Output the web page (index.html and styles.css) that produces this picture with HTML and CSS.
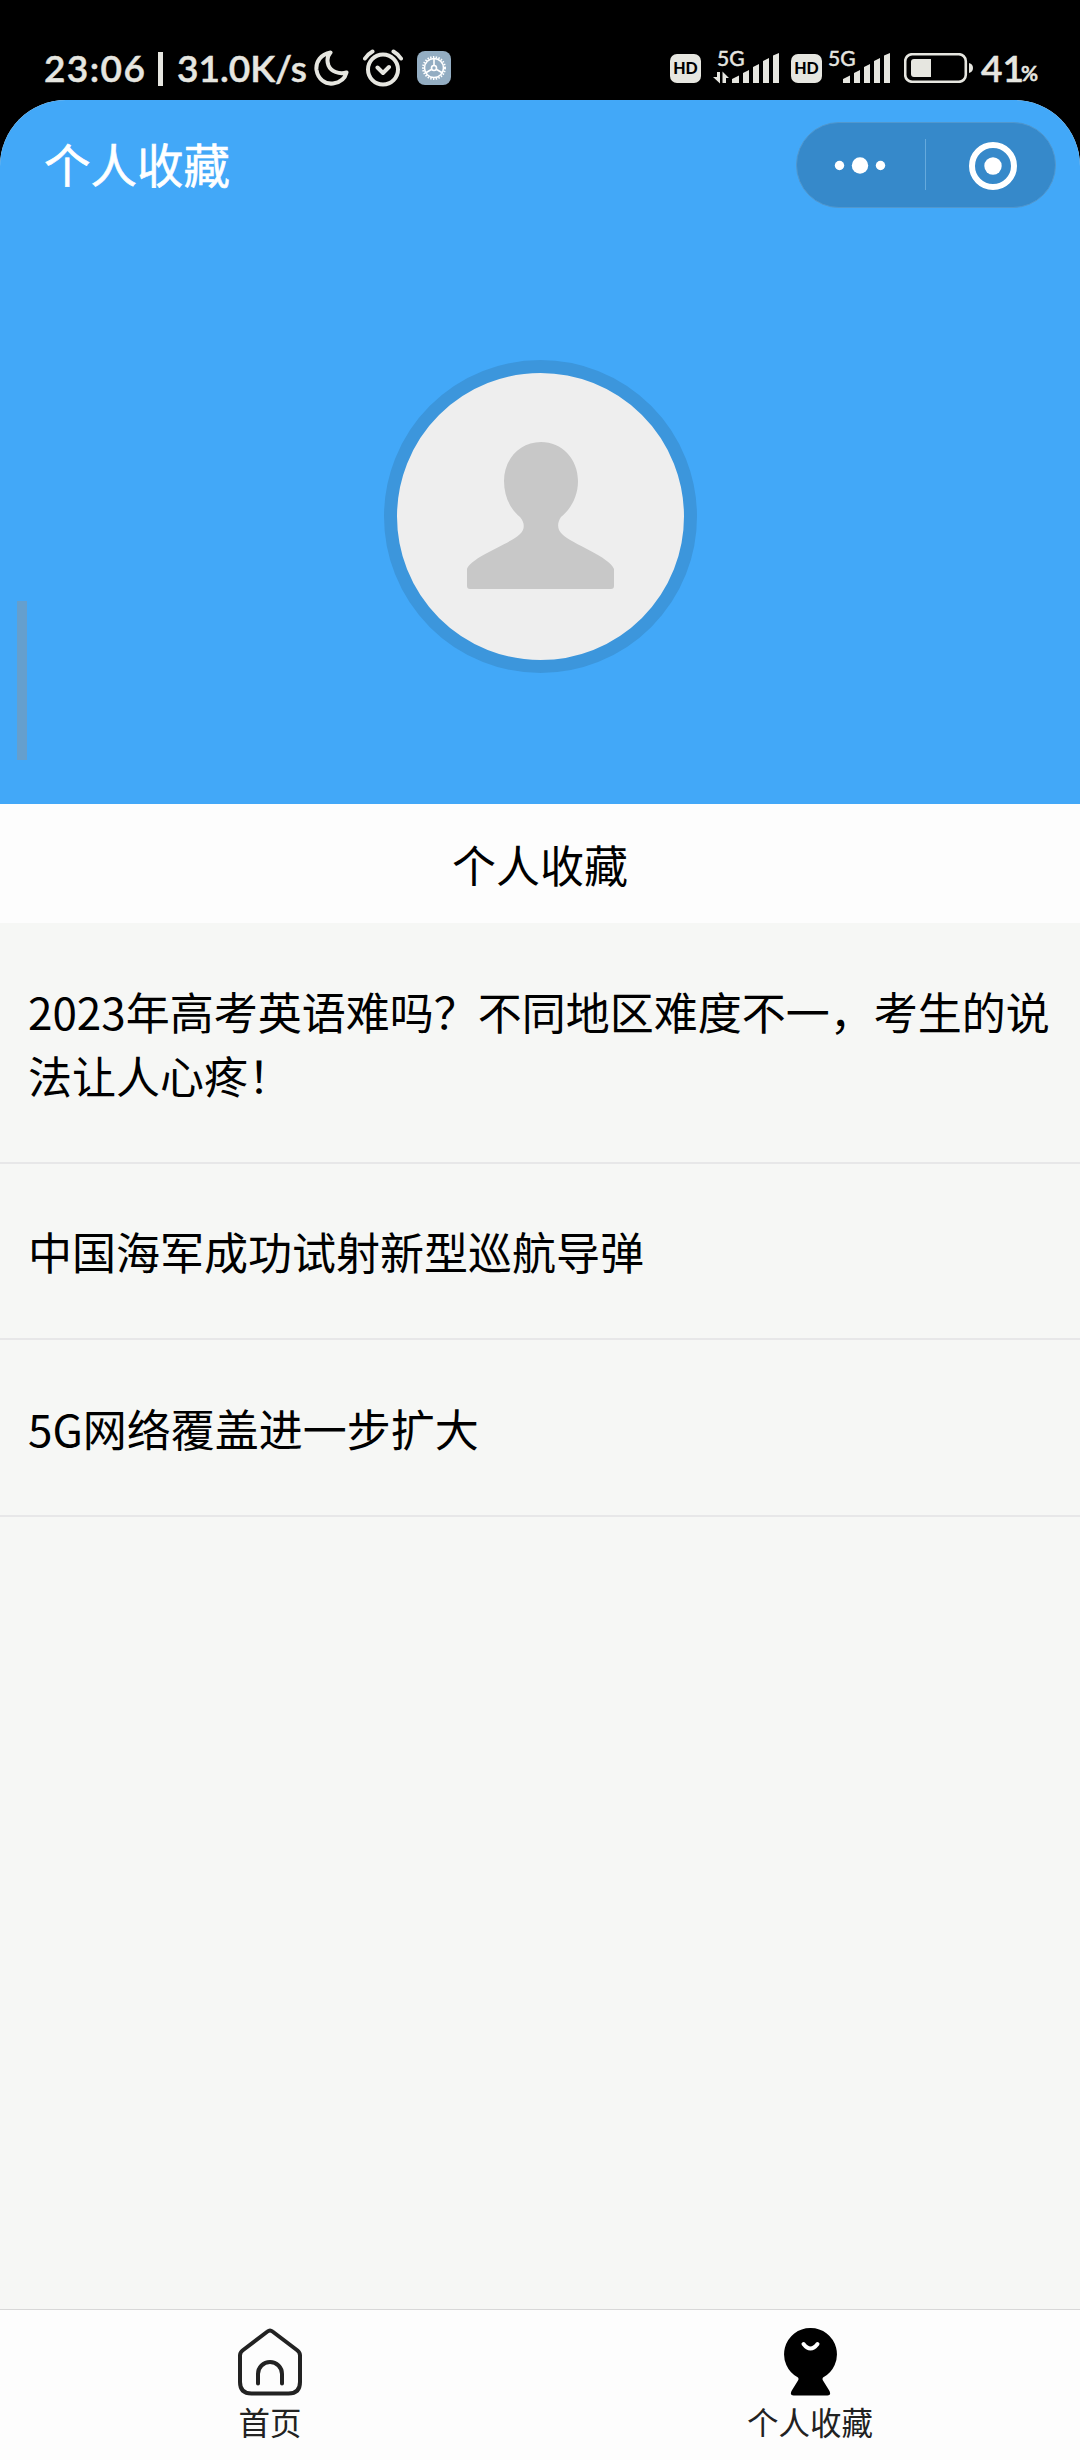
FILE: index.html
```html
<!DOCTYPE html>
<html lang="zh-CN">
<head>
<meta charset="utf-8">
<title>个人收藏</title>
<link rel="stylesheet" href="styles.css">
</head>
<body>
<div class="status">
  <span class="clock">23:06</span><span class="bar"></span><span class="speed">31.0K/s</span>
  <svg class="moon" width="36" height="38" viewBox="0 0 36 38"><path d="M16.500 3.500C7 5 1.500 13 2.500 21C4 30 11 35.500 19 34.500C26 33.500 31 29.500 32.500 23.500C25 25.500 17 22.500 14.500 16.500C12.800 12 13.500 7 16.500 3.500Z"/></svg>
  <svg class="alarm" width="40" height="38" viewBox="0 0 40 38"><circle cx="20" cy="20.500" r="15"/><path d="M14.500 18.500l5.500 5.500 6-6M2 9.500Q5 5 9.500 2.500M38 9.500Q35 5 30.500 2.500"/></svg>
  <svg class="gear" width="34" height="34" viewBox="0 0 34 34"><rect class="gear-box" width="34" height="34" rx="8"/><circle class="teeth" cx="17" cy="17" r="11"/><circle cx="17" cy="17" r="9.500"/><circle cx="17" cy="17" r="2.500"/><path d="M17 7.500v7M19.200 18.200l6 3.600M14.800 18.200l-6 3.600"/></svg>
  <span class="hd hd-one">HD</span>
  <span class="signal signal-one"><span class="net">5G</span><svg width="66" height="31" viewBox="0 0 66 31"><path d="M4 19h3v11.500L0 24h4zM13 30h-3.500V18.500L16 25h-3zM19 30v-4l7-3.500v7.500zM30 30V20l6-3v13zM40 30V14l6-3v19zM50 30V8l6-3v25zM60 30V2.500l6-2.500v30z"/></svg></span>
  <span class="hd hd-two">HD</span>
  <span class="signal signal-two"><span class="net">5G</span><svg width="66" height="31" viewBox="0 0 66 31"><path d="M19 30v-4l7-3.500v7.500zM30 30V20l6-3v13zM40 30V14l6-3v19zM50 30V8l6-3v25zM60 30V2.500l6-2.500v30z"/></svg></span>
  <svg class="battery" width="69" height="30" viewBox="0 0 69 30"><rect class="shell" x="1.200" y="1.200" width="60.600" height="27.600" rx="7"/><path d="M10 6h17v18H10a3 3 0 0 1-3-3V9a3 3 0 0 1 3-3zM65 10q4 1 4 5t-4 5z"/></svg>
  <span class="charge">41</span><span class="percent">%</span>
</div>
<div class="app">
  <header class="hero">
    <div class="navbar">
      <h1 class="title">个人收藏</h1>
      <svg class="capsule" width="260" height="86" viewBox="0 0 260 86"><rect class="pill" x=".5" y=".5" width="259" height="85" rx="42.500"/><circle cx="43.500" cy="43.500" r="4.700"/><circle cx="64" cy="43.500" r="8.200"/><circle cx="84.500" cy="43.500" r="4.700"/><path class="split" d="M129.500 17v51"/><circle class="ring" cx="197" cy="44" r="21"/><circle cx="197" cy="44" r="8.700"/></svg>
    </div>
    <div class="avatar">
      <svg width="287" height="287" viewBox="0 0 287 287"><path d="M144 69C165 69 181 86 181 108C181 123 174 136 164 144C160 150 160 156 165 161C175 171 213 184 217 196V213Q217 216 214 216H73Q70 216 70 213V196C74 184 113 171 123 161C128 156 128 150 123 144C113 136 107 123 107 108C107 86 123 69 144 69Z"/></svg>
    </div>
    <span class="scroll-hint"></span>
  </header>
  <h2 class="section">个人收藏</h2>
  <main class="list">
    <div class="item">2023年高考英语难吗？不同地区难度不一，考生的说法让人心疼！</div>
    <div class="item">中国海军成功试射新型巡航导弹</div>
    <div class="item">5G网络覆盖进一步扩大</div>
  </main>
  <nav class="tabs">
    <div class="tab">
      <svg width="64" height="68" viewBox="0 0 64 68"><path class="line" d="M29.500 3.500Q32 1.500 34.500 3.500L59.500 22.500Q62 24.500 62 27.500V54Q62 65.500 50.500 65.500H13.500Q2 65.500 2 54V27.500Q2 24.500 4.500 22.500ZM20 55.500V46a12 12 0 0 1 24 0v9.500"/></svg>
      <span>首页</span>
    </div>
    <div class="tab">
      <svg width="64" height="68" viewBox="0 0 64 68"><path d="M32.500 0A26.300 26.300 0 0 1 45 49.500Q44 51 45 52.500L51.500 63Q53.500 67.500 49.500 67.500H15.500Q11.500 67.500 13.500 63L20 52.500Q21 51 20 49.500A26.300 26.300 0 0 1 32.500 0Z"/><path class="smile" d="M25.500 16Q32.500 25 39.500 16"/></svg>
      <span>个人收藏</span>
    </div>
  </nav>
</div>
</body>
</html>
```
FILE: styles.css
```css
* { box-sizing: border-box; }
body {
  margin: 0;
  height: 2460px;
  display: flex;
  flex-direction: column;
  background: #000;
  color: #000;
  font-family: "Noto Sans CJK SC", sans-serif;
}
svg { display: block; flex: none; }

.status {
  height: 100px;
  flex: none;
  display: flex;
  align-items: flex-start;
  padding: 0 0 0 44px;
  color: #e6e6e0;
  fill: #e6e6e0;
  font-family: Lato, sans-serif;
  font-weight: 600;
  font-size: 37px;
  line-height: 44px;
  white-space: nowrap;
}
.status > * { flex: none; }
.clock { width: 114px; margin-top: 46px; letter-spacing: 1.4px; -webkit-text-stroke: .5px #e6e6e0; }
.bar { width: 5px; height: 34px; margin-top: 52px; background: #e6e6e0; }
.speed { width: 137px; margin: 46px 0 0 14px; letter-spacing: 0; -webkit-text-stroke: .5px #e6e6e0; }
.moon, .alarm { fill: none; stroke: #e6e6e0; stroke-width: 4; stroke-linejoin: round; stroke-linecap: round; }
.moon { margin: 49px 0 0 0; }
.alarm { margin: 49px 0 0 13px; }
.gear { margin: 51px 0 0 14px; fill: none; stroke: #fff; stroke-width: 1.6; }
.gear .gear-box { fill: #93adc2; stroke: none; }
.gear .teeth { stroke-width: 2; stroke-dasharray: 1.4 1.4; }
.hd {
  width: 31px;
  height: 29px;
  margin-top: 54px;
  border-radius: 7px;
  background: #e6e6e0;
  color: #000;
  font-weight: 900;
  font-size: 16px;
  line-height: 28px;
  text-align: center;
}
.hd-one { margin-left: 219px; }
.hd-two { margin-left: 12px; }
.signal { display: grid; width: 66px; margin: 53px 0 0 12px; }
.signal > * { grid-area: 1 / 1; }
.signal-two { margin-left: 2px; }
.net { margin: -6px 0 0 4px; font-size: 21px; line-height: 22px; font-weight: 400; -webkit-text-stroke: .5px #e6e6e0; }
.battery { margin: 53px 0 0 14px; }
.battery .shell { fill: none; stroke: #e6e6e0; stroke-width: 2.6; }
.charge { margin: 46px 0 0 8px; width: 40px; font-size: 37px; -webkit-text-stroke: .5px #e6e6e0; }
.percent { margin-top: 51px; font-size: 21px; -webkit-text-stroke: .6px #e6e6e0; }

.app {
  flex: 1;
  display: flex;
  flex-direction: column;
  overflow: hidden;
  border-radius: 66px 66px 0 0;
  background: #f6f7f5;
}
.hero { position: relative; height: 704px; flex: none; background: #42a8f8; }
.navbar {
  display: flex;
  justify-content: space-between;
  align-items: flex-start;
  padding: 22px 24px 0 44px;
}
.title { margin: 7px 0 0; color: #fff; font-size: 46.5px; line-height: 68px; font-weight: 400; -webkit-text-stroke: .6px #fff; }
.capsule { fill: #fff; }
.capsule .pill { fill: #3689ca; stroke: #5197cd; }
.capsule .split { stroke: #65aadd; }
.capsule .ring { fill: none; stroke: #fff; stroke-width: 6; }
.avatar {
  width: 313px;
  height: 313px;
  margin: 152px auto 0;
  border: 13px solid #3c96dc;
  border-radius: 50%;
  background: #eee;
  fill: #c8c8c8;
}
.scroll-hint { position: absolute; left: 17px; top: 501px; width: 10px; height: 159px; background: #659fcd; }
.section {
  height: 119px;
  flex: none;
  margin: 0;
  background: #fdfdfd;
  font-size: 44px;
  line-height: 120px;
  font-weight: 400;
  text-align: center;
}
.list { flex: 1; }
.item {
  padding: 55.5px 28px 55px;
  border-bottom: 2px solid #e7e7e8;
  font-size: 44px;
  line-height: 64px;
}
.tabs { height: 151px; flex: none; display: flex; border-top: 1px solid #d8d8d8; background: #fdfdfd; }
.tab {
  flex: 1;
  display: flex;
  flex-direction: column;
  align-items: center;
  padding-top: 18px;
  font-size: 31.5px;
  line-height: 46px;
  color: #222;
}
.tab span { margin-top: 2px; }
.tab .line { fill: none; stroke: #222; stroke-width: 4; stroke-linecap: round; stroke-linejoin: round; }
.tab .smile { fill: none; stroke: #fff; stroke-width: 4; stroke-linecap: round; }
```
